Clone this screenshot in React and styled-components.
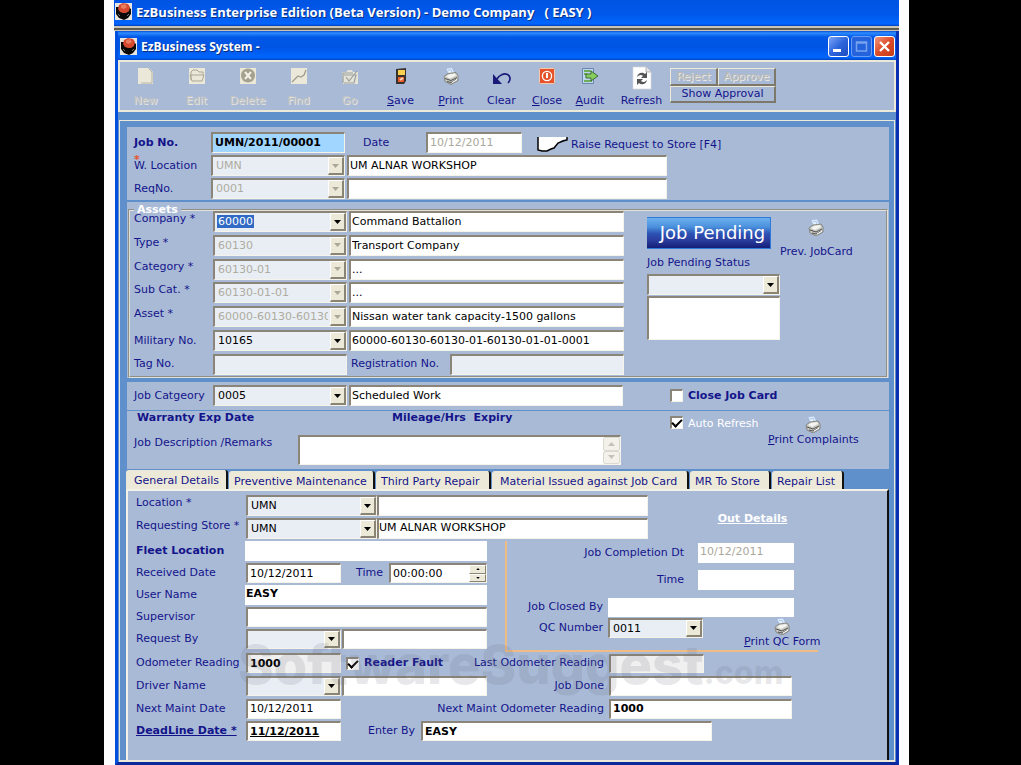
import React from "react";
import styled, { createGlobalStyle, css } from "styled-components";

const c = {
  panel: "#a9bad7",
  gutter: "#6090cc",
  beige: "#ece9d8",
  navy: "#14148a",
  frame: "#0050e0",
  dark: "#8a8578",
  combo: "#e9eef5",
};

const Global = createGlobalStyle`
  * { box-sizing: border-box; }
  body { margin: 0; background: #000; }
  body, button, input, select, textarea {
    font-family: "DejaVu Sans", Verdana, sans-serif;
    font-size: 11px;
  }
`;

const Page = styled.div`
  min-height: 100vh;
  padding: 0 112px 0 104px;
  display: flex;
`;
const Stage = styled.div`
  flex: 1;
  min-width: 0;
  padding: 0 10px;
  background: #fcfcfc;
  display: flex;
  flex-direction: column;
`;
const TitleBar = styled.header`
  height: ${(p) => (p.$inner ? 29 : 26)}px;
  padding: ${(p) => (p.$inner ? "2px 1px 0 2px" : "0 1px 3px")};
  display: flex;
  align-items: center;
  gap: 4px;
  color: #fff;
  background: ${(p) =>
    p.$inner
      ? "linear-gradient(#0a4fd8 0, #2f8cff 2px, #0058e8 6px, #0054e3 55%, #0066ff 90%, #0048c8 100%)"
      : "linear-gradient(#0054e3 0, #0058ea 55%, #0066ff 92%, #0040c0 100%)"};
`;
const Title = styled.h1`
  flex: 1;
  margin: 0;
  font: bold 13px/16px "Open Sans", "Noto Sans", sans-serif;
  text-shadow: 1px 1px #0a2f80;
  white-space: pre;
`;
const SubTitle = styled(Title)`
  font-size: 12px;
`;
const Divider = styled.div`
  height: 5px;
  background: linear-gradient(#c9c5b6 0 2px, #5d5a52 2px 4px, #c9c5b6 4px);
`;
const Win = styled.main`
  flex: 1;
  display: flex;
  flex-direction: column;
  border: solid;
  border-width: 0 3px 3px;
  border-color: ${c.frame} #0a2fb0 #0a2a9c ${c.frame};
  margin-left: 1px;
  background: ${c.gutter};
`;
const WinButtons = styled.div`
  display: flex;
  gap: 2px;
`;
const WinButton = styled.button`
  width: 21px;
  height: 21px;
  padding: 0;
  border: 1px solid ${(p) => (p.$kind === "max" ? "#6c9cf0" : "#fff")};
  border-radius: 3px;
  background: ${(p) =>
    p.$kind === "close"
      ? "linear-gradient(135deg, #f0967c, #dc4c28 50%, #c43c18)"
      : p.$kind === "max"
        ? "#2563dc"
        : "linear-gradient(135deg, #7ba4f4, #2d66dc 50%, #1c4cc0)"};
  svg { display: block; }
`;

const Toolbar = styled.nav`
  height: 52px;
  border: 2px solid ${c.beige};
  background: ${c.panel};
  display: flex;
`;
const ToolButton = styled.button`
  width: ${(p) => p.$w || 51}px;
  padding: 4px 0 0;
  border: 0;
  background: none;
  color: ${(p) => (p.disabled ? "#c3c4c2" : c.navy)};
  text-shadow: ${(p) => (p.disabled ? "1px 1px #e6e4da" : "none")};
  display: flex;
  flex-direction: column;
  align-items: center;
  line-height: 14px;
  svg { height: 20px; margin-bottom: 8px; }
`;
const ApprovalGrid = styled.div`
  width: 106px;
  padding-top: 6px;
  display: flex;
  flex-wrap: wrap;
  align-content: flex-start;
`;
const Raised = styled.button`
  flex: 1 1 ${(p) => p.$w}px;
  height: ${(p) => p.$h || 18}px;
  padding: 0;
  border: 1px solid;
  border-width: 1px 2px 2px 1px;
  border-color: #ece9d8 #7d7869 #7d7869 #ece9d8;
  background: ${c.panel};
  color: ${(p) => (p.disabled ? "#b9b9b2" : c.navy)};
  text-shadow: ${(p) => (p.disabled ? "1px 1px #eeebe0" : "none")};
  line-height: 14px;
`;

const Desk = styled.div`
  flex: 1;
  margin: 8px 1px 0;
  padding: 6px 5px 0 6px;
  border: solid ${c.beige};
  border-width: 1px 1px 2px;
  display: flex;
  flex-direction: column;
`;
const Panel = styled.section`
  margin: 0 0 ${(p) => p.$after}px 1px;
  padding: ${(p) => p.$pad};
  background: ${c.panel};
`;
const Stack = styled.div`
  display: flex;
  flex-direction: column;
  gap: ${(p) => p.$gap || 2}px;
  flex: ${(p) => (p.$grow ? 1 : "none")};
  min-width: 0;
`;
const Row = styled.div`
  display: flex;
  align-items: ${(p) => p.$align || "center"};
  height: ${(p) => p.$h || 21}px;
  padding-right: ${(p) => p.$end || 0}px;
`;
const Label = styled.label`
  flex: none;
  width: ${(p) => (p.$w ? p.$w + "px" : "auto")};
  margin-left: ${(p) => p.$ml || 0}px;
  margin-right: ${(p) => p.$mr || 0}px;
  color: ${(p) => (p.$white ? "#fff" : c.navy)};
  font-weight: ${(p) => (p.$bold ? "bold" : "normal")};
  text-decoration: ${(p) => (p.$under ? "underline" : "none")};
  text-align: ${(p) => (p.$right ? "right" : "left")};
  line-height: 16px;
  white-space: pre;
  ${(p) => p.$fill && css`flex: 1;`}
`;
const Star = styled.span`
  position: relative;
  &::before {
    content: "*";
    position: absolute;
    left: 0;
    top: -7px;
    color: #e8552c;
    font-weight: bold;
  }
`;
const inset = css`
  border: solid;
  border-width: 2px 1px 1px 2px;
  border-color: ${c.dark} #f6f4ea #f6f4ea ${c.dark};
`;
const Input = styled.input`
  ${inset}
  flex: ${(p) => (p.$w ? "none" : 1)};
  width: ${(p) => (p.$w ? p.$w + "px" : "auto")};
  min-width: 0;
  height: ${(p) => p.$h || 21}px;
  margin-left: ${(p) => p.$ml || 0}px;
  padding: ${(p) => p.$pad || "0 2px 1px"};
  background: ${(p) => p.$bg || "#fff"};
  color: ${(p) => (p.$dim ? "#aaa89c" : "#000")};
  font-weight: ${(p) => (p.$bold ? "bold" : "normal")};
  text-decoration: ${(p) => (p.$under ? "underline" : "none")};
  outline: 0;
  ${(p) => p.$flat && css`border: 0;`}
`;
const ComboBox = styled.span`
  ${inset}
  position: relative;
  flex: none;
  width: ${(p) => p.$w}px;
  height: ${(p) => p.$h || 21}px;
  background: ${c.combo};
  display: flex;
`;
const Select = styled.select`
  appearance: none;
  flex: 1;
  min-width: 0;
  height: 100%;
  padding: 0 18px 1px 3px;
  border: 0;
  outline: 0;
  background: none;
  opacity: 1;
  color: ${(p) => (p.disabled ? "#aeaca0" : "#000")};
  ${(p) =>
    p.$picked &&
    css`
      color: #fff;
      background: linear-gradient(#316ac5, #316ac5) 2px 2px / 37px 13px no-repeat;
    `}
`;
const Arrow = styled.span`
  position: absolute;
  right: 0;
  top: 0;
  bottom: 0;
  width: 16px;
  background: ${c.beige};
  border: solid;
  border-width: 1px 2px 2px 1px;
  border-color: #fff #8a8474 #8a8474 #fff;
  display: flex;
  align-items: center;
  justify-content: center;
  pointer-events: none;
`;
const Memo = styled.textarea`
  ${inset}
  width: ${(p) => (p.$w ? p.$w + "px" : "auto")};
  flex: ${(p) => (p.$w ? "none" : 1)};
  height: ${(p) => p.$h}px;
  resize: none;
  outline: 0;
  overflow: hidden;
  background: #fff;
  display: block;
`;
const Scroller = styled.div`
  ${inset}
  border-left: 0;
  width: 18px;
  height: 30px;
  background: #fff;
  display: flex;
  flex-direction: column;
`;
const ScrollButton = styled.button`
  flex: 1;
  padding: 0;
  border: 1px solid #dcdad0;
  border-radius: 2px;
  background: #f2f1ea;
  display: flex;
  align-items: center;
  justify-content: center;
`;
const MemoWrap = styled.div`
  flex: 1;
  display: flex;
  textarea { border-right: 0; }
`;
const Check = styled.input`
  ${inset}
  appearance: none;
  flex: none;
  width: 13px;
  height: 13px;
  margin: 0 5px 0 ${(p) => p.$ml || 0}px;
  background: #fff;
  display: grid;
  place-items: center;
  &:checked::before {
    content: "";
    width: 8px;
    height: 4px;
    border: solid #000;
    border-width: 0 0 2px 2px;
    transform: translateY(-1px) rotate(-45deg);
  }
`;
const Group = styled.fieldset`
  min-width: 0;
  margin: 0 1px;
  padding: 0 0 1px 4px;
  border: 2px groove #e4e2d6;
`;
const Legend = styled.legend`
  height: 2px;
  padding: 0 3px;
  color: #fff;
  font-weight: bold;
  line-height: 2px;
`;
const Spread = styled.div`
  flex: 1;
  min-width: 0;
  min-height: 164px;
  display: flex;
  flex-direction: column;
  justify-content: space-between;
`;
const Columns = styled.div`
  display: flex;
  align-items: ${(p) => p.$align || "stretch"};
`;
const Side = styled.div`
  flex: none;
  width: ${(p) => p.$w}px;
  padding: ${(p) => p.$pad || 0};
`;
const PendingButton = styled.button`
  width: 124px;
  height: 32px;
  margin: 0 0 6px;
  padding: 0 0 0 8px;
  border: 1px solid #2f7ad8;
  border-left: 0;
  background: linear-gradient(#6cb0ee, #4a90dc 30%, #2c52b4 52%, #2a3c9c 75%, #141e78);
  color: #fff;
  font-size: 18px;
  line-height: 28px;
  white-space: nowrap;
`;
const PrintButton = styled.button`
  flex: none;
  align-self: flex-start;
  margin-left: ${(p) => p.$ml || 0}px;
  padding: 0;
  border: 0;
  background: none;
  color: ${c.navy};
  display: flex;
  flex-direction: column;
  align-items: center;
  gap: ${(p) => p.$gap || 0}px;
  line-height: 14px;
  white-space: nowrap;
`;
const RequestButton = styled.button`
  margin-left: 15px;
  padding: 3px 0 0;
  border: 0;
  background: none;
  color: ${c.navy};
  display: flex;
  align-items: center;
  gap: 3px;
  white-space: nowrap;
`;

const Tabs = styled.div`
  display: flex;
  align-items: flex-end;
  gap: 1px;
  height: 18px;
`;
const Tab = styled.button`
  width: ${(p) => p.$w}px;
  height: ${(p) => (p.$active ? 19 : 18)}px;
  padding: 2px 0 0 ${(p) => p.$pl}px;
  border: 0;
  border-right: 2px solid #111;
  border-radius: 3px 3px 0 0;
  background: ${c.beige};
  color: ${c.navy};
  text-align: left;
  white-space: nowrap;
  line-height: 15px;
`;
const TabBody = styled.section`
  position: relative;
  flex: 1;
  padding: 4px 0 18px 8px;
  border: solid;
  border-width: 2px 2px 0;
  border-color: #f4f2e8 #111 #111 #f4f2e8;
  background: ${c.panel};
`;
const OutBlock = styled.div`
  flex: none;
  width: 313px;
  margin-left: 18px;
  padding-top: 2px;
  border: solid #f0bc84;
  border-width: 0 0 2px 2px;
  display: flex;
  flex-direction: column;
`;
const OutRow = styled(Row)`
  height: 20px;
  margin-bottom: ${(p) => p.$mb || 0}px;
`;
const OutTitle = styled.h2`
  margin: 0;
  color: #fff;
  font-size: 11px;
  line-height: 14px;
  text-align: center;
  text-decoration: underline;
`;
const Spinner = styled.span`
  ${inset}
  flex: 1;
  min-width: 0;
  height: 20px;
  background: #fff;
  display: flex;
  input { border: 0; height: 17px; }
`;
const SpinButtons = styled.span`
  width: 17px;
  display: flex;
  flex-direction: column;
`;
const SpinButton = styled(ScrollButton)`
  background: ${c.beige};
  border-color: #fff #8a8474 #8a8474 #fff;
  border-radius: 0;
`;
const Watermark = styled.div`
  position: absolute;
  left: 110px;
  top: 144px;
  color: rgba(110, 112, 125, 0.16);
  font: 800 54px/60px Inter, sans-serif;
  white-space: nowrap;
  pointer-events: none;
  small { font-size: 32px; }
`;

const Tri = ({ up, color = "#000", s = 7 }) => (
  <svg width={s} height={s === 7 ? 4 : 2} viewBox="0 0 7 4" aria-hidden="true">
    <path d={up ? "M0 4h7L3.500 0z" : "M0 0h7L3.500 4z"} fill={color} />
  </svg>
);

function Combo({ id, value = "", w, h, disabled, picked, label }) {
  return (
    <ComboBox $w={w} $h={h}>
      <Select id={id} defaultValue={value} disabled={disabled} $picked={picked} aria-label={label}>
        <option value={value}>{value}</option>
      </Select>
      <Arrow>
        <Tri color={disabled ? "#aca899" : "#000"} />
      </Arrow>
    </ComboBox>
  );
}
const Field = ({ value = "", ...p }) => <Input type="text" defaultValue={value} {...p} />;

const Logo = () => (
  <svg width="17" height="17" viewBox="0 0 17 17" aria-hidden="true">
    <path d="M0 0h17v17H0z" fill="#e8e6e0" />
    <path d="M1 4h4l8 0 3 2v5l-3 4-4 2-5-2-3-4z" fill="#090909" />
    <path d="M4 2l4-2 5 1 2 3-1 4-3 2-3 0-3-1-2-3z" fill="#d5492f" />
    <path d="M6 2l4-1 2 3-3 2-3-1z" fill="#e77c60" />
    <path d="M3 11l2 2M12 13l2-2" stroke="#777" />
  </svg>
);
const Printer = () => (
  <svg width="16" height="17" viewBox="0 0 16 17" aria-hidden="true">
    <path d="M3 1l6-1 3 6-6 2z" fill="#e4effc" stroke="#9db8dc" strokeWidth=".7" />
    <path d="M5 3l3-1 1.500 4" fill="none" stroke="#a8c8ee" />
    <path d="M1 9l4-3 8-1 2 3v5l-7 4-6-3z" fill="#c9c9c4" stroke="#77766f" strokeWidth=".8" />
    <path d="M3 9l3-2 6-1 1 2-6 3z" fill="#f4f4f0" />
    <path d="M2 11l6 2 6-3M4 14l4 1 5-3" fill="none" stroke="#4f4f4c" />
    <path d="M9 15l5-3" stroke="#fff" />
  </svg>
);
const iconArt = {
  New: (
    <>
      <path d="M1 1h11l4 4v12H1z" fill="#ebe8d9" />
      <path d="M12 1v1l3 3v11H4" fill="none" stroke="#b7b3a2" />
    </>
  ),
  Edit: (
    <>
      <path d="M1 1h16v16H1z" fill="#ebe8d9" />
      <path d="M3 13V5l2-2h4l2 2h4v3M2 8h14l-2 6H4z" fill="none" stroke="#aaa694" />
    </>
  ),
  Delete: (
    <>
      <path d="M1 1h16v16H1z" fill="#ebe8d9" />
      <circle cx="9" cy="8.500" r="7" fill="#a5a18f" />
      <path d="M6 5l6 7M12 5l-6 7" stroke="#f3f1e6" strokeWidth="2" />
    </>
  ),
  Find: (
    <>
      <path d="M1 1h16v16H1z" fill="#ebe8d9" />
      <path d="M2 15l6-6 3 1 3-2 2-5" fill="none" stroke="#a09c8b" strokeWidth="1.300" />
    </>
  ),
  Go: (
    <>
      <path d="M1 5h4l2-2h4l1 2h5v12H2z" fill="#e6e4d8" />
      <path d="M2 16V6h10M3 8h12l-2 8H3M5 10l3 4 8-10" fill="none" stroke="#9aa0a0" strokeWidth="1.200" />
    </>
  ),
  Save: (
    <>
      <path d="M4 2l10-1v13l-2 3H4z" fill="#38322e" />
      <path d="M6 3h7v5H6z" fill="#fad14e" />
      <path d="M6 10h6v5H6z" fill="#e85b2c" />
      <path d="M8 13l3-2" stroke="#fbd9b8" strokeWidth="2" />
    </>
  ),
  Clear: (
    <>
      <path d="M0 7v10h9z" fill="#1a1a78" />
      <path d="M4 12c2-4 7-6 10.500-4.500 3 1.500 3.500 5.500.5 8.500" fill="none" stroke="#1a1a78" strokeWidth="1.700" />
    </>
  ),
  Close: (
    <>
      <rect x="1.500" y="1.500" width="15" height="15" rx="1" fill="#e4532c" stroke="#f6c7ac" />
      <circle cx="9" cy="9" r="4.600" fill="none" stroke="#fff" strokeWidth="1.300" />
      <path d="M9 6v5" stroke="#fff" strokeWidth="2" />
    </>
  ),
  Audit: (
    <>
      <path d="M1.500 1.500h11v15h-11z" fill="#bcd4ec" stroke="#6c87ae" />
      <path d="M3 4h7M3 7h3M3 14h8" stroke="#6fae58" strokeWidth="2" />
      <path d="M5 7h5V4l7 5-7 5v-3H5z" fill="#86cd5c" stroke="#3f6b35" />
    </>
  ),
};
const Icon = ({ name }) =>
  name === "Print" ? (
    <Printer />
  ) : name === "Refresh" ? (
    <svg width="20" height="24" viewBox="0 0 20 24" aria-hidden="true">
      <path d="M1 1h13l5 5v17H1z" fill="#fff" stroke="#d8d8d8" strokeWidth=".7" />
      <path d="M14 1v5h5" fill="#e6e6e6" stroke="#999" strokeWidth=".7" />
      <path d="M5 11c1-5 6-5 8-3l2-2v6H9l2-2c-2-2-4-1-6 1zM15 14c-1 5-6 5-8 3l-2 2v-6h6l-2 2c2 2 4 1 6-1z" fill="#555" />
    </svg>
  ) : (
    <svg width="18" height="18" viewBox="0 0 18 18" aria-hidden="true">{iconArt[name]}</svg>
  );
const RefreshButton = styled(ToolButton)`
  svg { height: 24px; margin-bottom: 4px; }
`;

const tools = [
  ["New", 51, true], ["Edit", 51, true], ["Delete", 51, true], ["Find", 51, true], ["Go", 51, true],
  ["Save", 51], ["Print", 50], ["Clear", 51], ["Close", 40], ["Audit", 46],
];
const keyed = ["Save", "Print", "Close", "Audit"];

const assets = [
  ["Company *", "60000", "Command Battalion"],
  ["Type *", "60130", "Transport Company"],
  ["Category *", "60130-01", "..."],
  ["Sub Cat. *", "60130-01-01", "..."],
  ["Asset *", "60000-60130-60130-01", "Nissan water tank capacity-1500 gallons"],
  ["Military No.", "10165", "60000-60130-60130-01-60130-01-01-0001"],
];
const tabs = [
  ["General Details", 102, 8], ["Preventive Maintenance", 146, 5], ["Third Party Repair", 115, 5],
  ["Material Issued against Job Card", 197, 8], ["MR To Store", 81, 5], ["Repair List", 72, 5],
];

export default function App() {
  return (
    <Page>
      <Global />
      <Stage>
        <TitleBar>
          <Logo />
          <Title>{"EzBusiness Enterprise Edition (Beta Version) - Demo Company   ( EASY )"}</Title>
        </TitleBar>
        <Divider />
        <Win>
          <TitleBar $inner>
            <Logo />
            <SubTitle as="h2">EzBusiness System -</SubTitle>
            <WinButtons>
              <WinButton $kind="min" aria-label="Minimize">
                <svg width="19" height="19"><path d="M4 12h8v3H4z" fill="#fff" /></svg>
              </WinButton>
              <WinButton $kind="max" aria-label="Maximize">
                <svg width="19" height="19"><path d="M4.500 5h10v9h-10zM4 6h11" fill="none" stroke="#78a2f0" strokeWidth="1.500" /></svg>
              </WinButton>
              <WinButton $kind="close" aria-label="Close window">
                <svg width="19" height="19"><path d="M5 5l9 9M14 5l-9 9" stroke="#fff" strokeWidth="2.400" /></svg>
              </WinButton>
            </WinButtons>
          </TitleBar>

          <Toolbar>
            {tools.map(([name, w, off]) => (
              <ToolButton key={name} $w={w} disabled={off}>
                <Icon name={name} />
                <span>
                  {keyed.includes(name) ? <><u>{name[0]}</u>{name.slice(1)}</> : name}
                </span>
              </ToolButton>
            ))}
            <RefreshButton $w={57}>
              <Icon name="Refresh" />
              <span>Refresh</span>
            </RefreshButton>
            <ApprovalGrid>
              <Raised $w={48} disabled>Reject</Raised>
              <Raised $w={58} disabled>Approve</Raised>
              <Raised $w={106} $h={17}>Show Approval</Raised>
            </ApprovalGrid>
          </Toolbar>

          <Desk>
            <Panel $after={2} $pad="5px 0 1px 7px">
              <Stack>
                <Row>
                  <Label $w={77} $bold htmlFor="job">Job No.</Label>
                  <Field id="job" $w={134} $bg="#a0d6ff" $bold value="UMN/2011/00001" />
                  <Label $ml={18} $w={63} htmlFor="date">Date</Label>
                  <Field id="date" $w={96} $dim value="10/12/2011" />
                  <RequestButton>
                    <svg width="31" height="17" viewBox="0 0 31 17" aria-hidden="true">
                      <path d="M1 1h29v2l-5 1-4 3-4 5-3 1-3 2H4l-3-1z" fill="#fff" />
                      <path d="M1 1v13l4 1h5l4-2 3-1 4-5 5-2 4-1V1" fill="none" stroke="#000" strokeWidth="1.500" />
                    </svg>
                    Raise Request to Store [F4]
                  </RequestButton>
                </Row>
                <Row $end={222}>
                  <Label $w={77} htmlFor="wloc"><Star>W. Location</Star></Label>
                  <Combo id="wloc" w={134} value="UMN" disabled />
                  <Field $ml={2} $pad="0 1px 2px" value="UM ALNAR WORKSHOP" aria-label="Location name" />
                </Row>
                <Row $end={222}>
                  <Label $w={77} htmlFor="req">ReqNo.</Label>
                  <Combo id="req" w={134} value="0001" disabled />
                  <Field $ml={2} aria-label="Request text" />
                </Row>
              </Stack>
            </Panel>

            <Panel $after={4} $pad="7px 0 0">
              <Group>
                <Legend>Assets</Legend>
                <Columns>
                  <Spread>
                    {assets.map(([name, code, text], i) => (
                      <Row key={name} $align={i === 5 ? "center" : "flex-start"}>
                        <Label $w={79} htmlFor={"asset" + i}>{name}</Label>
                        <Combo id={"asset" + i} w={134} value={code} disabled={i > 0 && i < 5} picked={i === 0} />
                        <Field $ml={2} $pad="0 1px 1px" value={text} aria-label={name + " description"} />
                      </Row>
                    ))}
                    <Row>
                      <Label $w={79} htmlFor="tag">Tag No.</Label>
                      <Field id="tag" $w={134} $bg={c.combo} />
                      <Label $ml={4} $w={99} htmlFor="reg">Registration No.</Label>
                      <Field id="reg" $bg={c.combo} />
                    </Row>
                  </Spread>
                  <Side $w={156} $pad="6px 0 0 23px">
                    <PendingButton>Job Pending</PendingButton>
                    <Label htmlFor="pend">Job Pending Status</Label>
                    <Stack $gap={1}>
                      <Row $h={2} />
                      <Combo id="pend" w={133} h={21} />
                      <Memo $w={133} $h={44} aria-label="Pending notes" />
                    </Stack>
                  </Side>
                  <Side $w={106} $pad="8px 0 0">
                    <PrintButton $gap={9}><Printer />Prev. JobCard</PrintButton>
                  </Side>
                </Columns>
              </Group>
            </Panel>

            <Panel $after={1} $pad="3px 0 4px 7px">
              <Row>
                <Label $w={79} htmlFor="cat">Job Catgeory</Label>
                <Combo id="cat" w={134} value="0005" />
                <Field $ml={2} $pad="0 1px 1px" value="Scheduled Work" aria-label="Category name" />
                <Side $w={266} $pad="0 0 0 47px">
                  <Columns $align="center">
                    <Check type="checkbox" id="closeCard" />
                    <Label $bold htmlFor="closeCard">Close Job Card</Label>
                  </Columns>
                </Side>
              </Row>
            </Panel>

            <Panel $after={2} $pad="0 0 4px 7px">
              <Columns>
                <Stack $grow $gap={10}>
                  <Row $h={14}>
                    <Label as="span" $ml={3} $w={255} $bold>Warranty Exp Date</Label>
                    <Label as="span" $bold>{"Mileage/Hrs  Expiry"}</Label>
                  </Row>
                  <Row $h={30} $align="flex-start">
                    <Label $w={164} htmlFor="remarks">Job Description /Remarks</Label>
                    <MemoWrap>
                      <Memo id="remarks" $h={30} />
                      <Scroller>
                        <ScrollButton aria-label="Scroll up"><Tri up color="#c4c2b8" /></ScrollButton>
                        <ScrollButton aria-label="Scroll down"><Tri color="#c4c2b8" /></ScrollButton>
                      </Scroller>
                    </MemoWrap>
                  </Row>
                </Stack>
                <Side $w={268} $pad="5px 0 0 49px">
                  <Columns $align="flex-start">
                    <Check type="checkbox" id="auto" defaultChecked />
                    <Label $white $w={80} htmlFor="auto">Auto Refresh</Label>
                    <PrintButton><Printer /><span><u>P</u>rint Complaints</span></PrintButton>
                  </Columns>
                </Side>
              </Columns>
            </Panel>

            <Tabs role="tablist">
              {tabs.map(([name, w, pl], i) => (
                <Tab key={name} role="tab" aria-selected={i === 0} $active={i === 0} $w={w} $pl={pl}>{name}</Tab>
              ))}
            </Tabs>
            <TabBody>
              <Columns>
                <Stack $grow>
                  <Row $align="flex-start">
                    <Label $w={110} htmlFor="loc">Location *</Label>
                    <Combo id="loc" w={131} value="UMN" />
                    <Field aria-label="Location detail" />
                  </Row>
                  <Row $align="flex-start">
                    <Label $w={110} htmlFor="store">Requesting Store *</Label>
                    <Combo id="store" w={131} value="UMN" />
                    <Field $pad="0 0 3px" value="UM ALNAR WORKSHOP" aria-label="Store name" />
                  </Row>
                </Stack>
                <Side $w={239} $pad="17px 30px 0 0"><OutTitle>Out Details</OutTitle></Side>
              </Columns>
              <Row $h={2} />
              <Row $h={111} $end={69} $align="stretch">
                <Stack $grow>
                  <Row $h={20}>
                    <Label $w={109} $bold htmlFor="fleet">Fleet Location</Label>
                    <Field id="fleet" $h={20} $flat />
                  </Row>
                  <Row $h={20}>
                    <Label $w={110} htmlFor="recv">Received Date</Label>
                    <Field id="recv" $w={95} $h={20} value="10/12/2011" />
                    <Label $ml={15} $w={33} htmlFor="time">Time</Label>
                    <Spinner>
                      <Field id="time" $h={17} value="00:00:00" />
                      <SpinButtons>
                        <SpinButton aria-label="Later"><Tri up s={4} /></SpinButton>
                        <SpinButton aria-label="Earlier"><Tri s={4} /></SpinButton>
                      </SpinButtons>
                    </Spinner>
                  </Row>
                  <Row $h={20}>
                    <Label $w={109} htmlFor="user">User Name</Label>
                    <Field id="user" $h={20} $flat $bold $pad="0 1px 4px" value="EASY" />
                  </Row>
                  <Row $h={20}>
                    <Label $w={110} htmlFor="sup">Supervisor</Label>
                    <Field id="sup" $h={20} />
                  </Row>
                  <Row $h={20}>
                    <Label $w={110} htmlFor="reqby">Request By</Label>
                    <Combo id="reqby" w={95} h={20} />
                    <Field $h={20} $ml={1} aria-label="Requester name" />
                  </Row>
                </Stack>
                <OutBlock>
                  <OutRow $mb={7} $end={24}>
                    <Label $fill $right $mr={14} htmlFor="comp">Job Completion Dt</Label>
                    <Field id="comp" $w={96} $h={20} $flat $dim $pad="0 2px 4px" value="10/12/2011" />
                  </OutRow>
                  <OutRow $mb={7} $end={24}>
                    <Label $fill $right $mr={14} htmlFor="outTime">Time</Label>
                    <Field id="outTime" $w={96} $h={20} $flat />
                  </OutRow>
                  <OutRow $mb={1} $end={24}>
                    <Label $w={96} $right $mr={5} htmlFor="closedBy">Job Closed By</Label>
                    <Field id="closedBy" $h={19} $flat />
                  </OutRow>
                  <OutRow>
                    <Label $w={96} $right $mr={5} htmlFor="qc">QC Number</Label>
                    <Combo id="qc" w={95} h={20} value="0011" />
                    <PrintButton $ml={41}><Printer /><span><u>P</u>rint QC Form</span></PrintButton>
                  </OutRow>
                </OutBlock>
              </Row>
              <Row $h={1} />
              <Stack $gap={2}>
                <Row $h={20} $end={95}>
                  <Label $w={110} htmlFor="odo">Odometer Reading</Label>
                  <Field id="odo" $w={95} $h={20} $bg="#f0f0f0" $bold value="1000" />
                  <Check type="checkbox" id="fault" $ml={5} defaultChecked />
                  <Label $bold htmlFor="fault">Reader Fault</Label>
                  <Label $fill $right $mr={5} htmlFor="lastOdo">Last Odometer Reading</Label>
                  <Field id="lastOdo" $w={95} $h={19} $bg="#f0f0f0" />
                  <Side $w={88} />
                </Row>
                <Row $h={21} $end={95}>
                  <Label $w={110} htmlFor="driver">Driver Name</Label>
                  <Combo id="driver" w={95} h={20} />
                  <Field $w={145} $h={20} $ml={1} aria-label="Driver full name" />
                  <Label $fill $right $mr={5} htmlFor="done">Job Done</Label>
                  <Field id="done" $w={183} $h={20} />
                </Row>
                <Row $h={21} $end={95}>
                  <Label $w={110} htmlFor="next">Next Maint Date</Label>
                  <Field id="next" $w={95} $h={20} value="10/12/2011" />
                  <Label $fill $right $mr={5} htmlFor="nextOdo">Next Maint Odometer Reading</Label>
                  <Field id="nextOdo" $w={183} $h={20} $bold value="1000" />
                </Row>
                <Row $h={20} $end={175}>
                  <Label $w={110} $bold $under htmlFor="dead">DeadLine Date *</Label>
                  <Field id="dead" $w={95} $h={20} $bold $under value="11/12/2011" />
                  <Label $ml={27} $w={53} htmlFor="enter">Enter By</Label>
                  <Field id="enter" $h={20} $bold value="EASY" />
                </Row>
              </Stack>
              <Watermark aria-hidden="true">SoftwareSuggest<small>.com</small></Watermark>
            </TabBody>
          </Desk>
        </Win>
      </Stage>
    </Page>
  );
}
